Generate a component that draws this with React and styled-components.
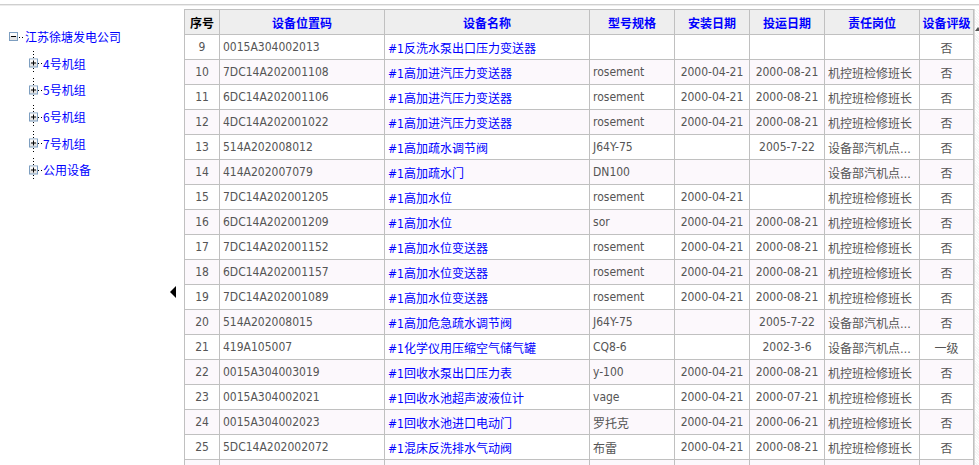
import React from "react";
import styled, { createGlobalStyle } from "styled-components";

const Global = createGlobalStyle`
  html, body { margin: 0; padding: 0; background: #fff; }
  body { font-family: Tahoma, "DejaVu Sans Condensed", "Liberation Sans", "Noto Sans CJK SC", sans-serif; font-size: 12px; }
`;

const Page = styled.div`
  width: 979px;
  height: 465px;
  overflow: hidden;
  padding-top: 4px;
  box-sizing: border-box;
`;

const TopLine = styled.div`
  height: 1px;
  border-top: 1px solid #cfcfcf;
  background: #ececec;
`;

const Main = styled.div`
  display: flex;
  padding-top: 3px;
`;

const TreePanel = styled.div`
  flex: 0 0 162px;
  padding-top: 15px;
  font-family: "Noto Sans CJK SC", sans-serif;
`;

const TreeRow = styled.div`
  display: flex;
  align-items: center;
  height: 26.6px;
  padding-left: ${(p) => p.$indent}px;
`;

const TreeLabel = styled.span`
  color: #0000ff;
  font-size: 12px;
  line-height: 14px;
  white-space: nowrap;
`;

const Toggle = styled.div`
  flex: 0 0 22px;
  display: flex;
  align-items: center;
  justify-content: center;
  padding-top: 277px;
  align-self: flex-start;
`;

const TableWrap = styled.div`
  display: flex;
  flex: 0 0 auto;
`;

const Table = styled.table`
  border-collapse: collapse;
  table-layout: fixed;
  width: 789px;
  border-left: 1px solid #c0c0c0;
`;

const HeadCell = styled.th`
  height: 24px;
  padding: 0;
  background: #eeeeee;
  border: 1px solid #c0c0c0;
  color: ${(p) => (p.$dark ? "#000" : "#0000ff")};
  font-family: "Noto Sans CJK SC", sans-serif;
  font-weight: bold;
  font-size: 12px;
  text-align: center;
  white-space: nowrap;
  overflow: hidden;
`;

const Row = styled.tr`
  background: ${(p) => (p.$alt ? "#fcf8fc" : "#ffffff")};
`;

const Cell = styled.td`
  height: 24px;
  padding: 0 3px;
  border: 1px solid #c0c0c0;
  color: ${(p) => (p.$link ? "#0000ff" : "#555555")};
  text-align: ${(p) => p.$align || "left"};
  white-space: nowrap;
  overflow: hidden;
  text-overflow: ellipsis;
  font-size: 12px;
`;

const Scroll = styled.div`
  width: 5px;
  position: relative;
  border-left: 1px solid #d8d8d8;
  background-image: repeating-linear-gradient(45deg, #f4f4f4 0 1px, #fff 1px 2px);
  height: 460px;
`;

const ScrollArrow = styled.div`
  position: absolute;
  top: 18px;
  left: 0;
  width: 0;
  height: 0;
  border-left: 3px solid transparent;
  border-right: 3px solid transparent;
  border-bottom: 4px solid #555;
`;

const BoxIcon = ({ plus }) => (
  <svg width="14" height="27" viewBox="0 0 14 27">
    <line x1="4.5" y1="1" x2="4.5" y2="8" stroke="#000" strokeDasharray="1 2" />
    <line x1="4.5" y1="18" x2="4.5" y2="24" stroke="#000" strokeDasharray="1 2" />
    <rect x="0.5" y="9" width="8" height="8" fill="#e4e4e4" stroke="#7d9ec0" />
    <rect x="1" y="9.5" width="7" height="3" fill="#fbfbfb" />
    <line x1="2" y1="13" x2="7" y2="13" stroke="#000" />
    {plus && <line x1="4.5" y1="10.5" x2="4.5" y2="15.5" stroke="#000" />}
    <line x1="9" y1="13.5" x2="13" y2="13.5" stroke="#000" strokeDasharray="1 2" />
  </svg>
);

const RootIcon = () => (
  <svg width="16" height="10" viewBox="0 0 16 10">
    <rect x="0.5" y="0.5" width="8" height="8" fill="#e4e4e4" stroke="#7d9ec0" />
    <rect x="1" y="1" width="7" height="3" fill="#fbfbfb" />
    <line x1="2" y1="4.5" x2="7" y2="4.5" stroke="#000" />
    <line x1="10" y1="5.5" x2="15" y2="5.5" stroke="#000" strokeDasharray="1 2" />
  </svg>
);

const cols = [35, 165, 205, 85, 75, 75, 95, 54];
const heads = ["序号", "设备位置码", "设备名称", "型号规格", "安装日期", "投运日期", "责任岗位", "设备评级"];

const rows = [
  [9, "0015A304002013", "#1反洗水泵出口压力变送器", "", "", "", "", "否"],
  [10, "7DC14A202001108", "#1高加进汽压力变送器", "rosement", "2000-04-21", "2000-08-21", "机控班检修班长", "否"],
  [11, "6DC14A202001106", "#1高加进汽压力变送器", "rosement", "2000-04-21", "2000-08-21", "机控班检修班长", "否"],
  [12, "4DC14A202001022", "#1高加进汽压力变送器", "rosement", "2000-04-21", "2000-08-21", "机控班检修班长", "否"],
  [13, "514A202008012", "#1高加疏水调节阀", "J64Y-75", "", "2005-7-22", "设备部汽机点检员", "否"],
  [14, "414A202007079", "#1高加疏水门", "DN100", "", "", "设备部汽机点检员", "否"],
  [15, "7DC14A202001205", "#1高加水位", "rosement", "2000-04-21", "", "机控班检修班长", "否"],
  [16, "6DC14A202001209", "#1高加水位", "sor", "2000-04-21", "2000-08-21", "机控班检修班长", "否"],
  [17, "7DC14A202001152", "#1高加水位变送器", "rosement", "2000-04-21", "2000-08-21", "机控班检修班长", "否"],
  [18, "6DC14A202001157", "#1高加水位变送器", "rosement", "2000-04-21", "2000-08-21", "机控班检修班长", "否"],
  [19, "7DC14A202001089", "#1高加水位变送器", "rosement", "2000-04-21", "2000-08-21", "机控班检修班长", "否"],
  [20, "514A202008015", "#1高加危急疏水调节阀", "J64Y-75", "", "2005-7-22", "设备部汽机点检员", "否"],
  [21, "419A105007", "#1化学仪用压缩空气储气罐", "CQ8-6", "", "2002-3-6", "设备部汽机点检员", "一级"],
  [22, "0015A304003019", "#1回收水泵出口压力表", "y-100", "2000-04-21", "2000-08-21", "机控班检修班长", "否"],
  [23, "0015A304002021", "#1回收水池超声波液位计", "vage", "2000-04-21", "2000-07-21", "机控班检修班长", "否"],
  [24, "0015A304002023", "#1回收水池进口电动门", "罗托克", "2000-04-21", "2000-06-21", "机控班检修班长", "否"],
  [25, "5DC14A202002072", "#1混床反洗排水气动阀", "布雷", "2000-04-21", "2000-08-21", "机控班检修班长", "否"],
  [26, "5DC14A202002073", "#1混床反洗排水气动阀", "布雷", "2000-04-21", "2000-08-21", "机控班检修班长", "否"],
];

const aligns = ["center", "left", "left", "left", "center", "center", "left", "center"];

const treeChildren = ["4号机组", "5号机组", "6号机组", "7号机组", "公用设备"];

export default function App() {
  return (
    <>
      <Global />
      <Page>
        <TopLine />
        <Main>
          <TreePanel>
            <TreeRow $indent={9}>
              <RootIcon />
              <TreeLabel>江苏徐塘发电公司</TreeLabel>
            </TreeRow>
            {treeChildren.map((c) => (
              <TreeRow key={c} $indent={29}>
                <BoxIcon plus />
                <TreeLabel>{c}</TreeLabel>
              </TreeRow>
            ))}
          </TreePanel>
          <Toggle>
            <svg width="6" height="12" viewBox="0 0 6 12">
              <polygon points="6,0 6,12 0,6" fill="#000" />
            </svg>
          </Toggle>
          <TableWrap>
            <Table>
              <colgroup>
                {cols.map((w, i) => (
                  <col key={i} style={{ width: w }} />
                ))}
              </colgroup>
              <thead>
                <tr>
                  {heads.map((h, i) => (
                    <HeadCell key={h} $dark={i === 0}>
                      {h}
                    </HeadCell>
                  ))}
                </tr>
              </thead>
              <tbody>
                {rows.map((r, ri) => (
                  <Row key={r[0]} $alt={ri % 2 === 1}>
                    {r.map((v, ci) => (
                      <Cell key={ci} $align={aligns[ci]} $link={ci === 2}>
                        {v}
                      </Cell>
                    ))}
                  </Row>
                ))}
              </tbody>
            </Table>
            <Scroll>
              <ScrollArrow />
            </Scroll>
          </TableWrap>
        </Main>
      </Page>
    </>
  );
}
